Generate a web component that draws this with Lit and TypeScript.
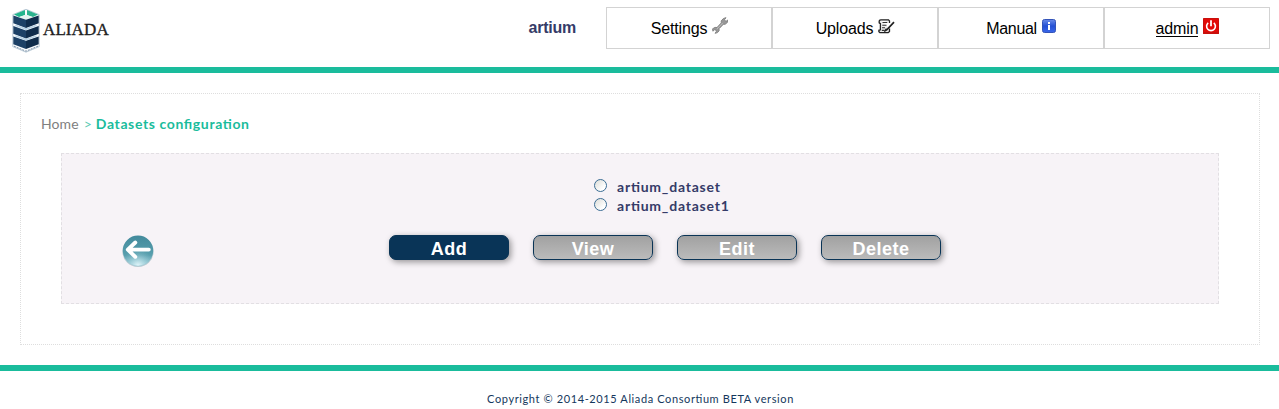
import { LitElement, html, svg, css } from "lit";
import { customElement } from "lit/decorators.js";

const wrench = html`<svg class="icon" width="16" height="17" viewBox="0 0 16 17">
  <path d="M.6 11.8 3 10.4l2 .1 4.3-4.6-.1-2L11.4 1.5 14 .7l-1.5 2 .6 1.2 1.2.2L15.8 3l-.2 2.2-2.4 2-1.9.1L7 11.7l.1 2-1.6 1.9-2.4.7 1.3-2-.6-1.4-1.4-.1L.9 14.2z" fill="#989898" stroke="#858585" stroke-width="1"/>
  <path d="m4.8 12.2 6-6.3" stroke="#bdbdbd" stroke-width="1"/>
</svg>`;

const notes = html`<svg class="icon" width="17" height="15" viewBox="0 0 17 15">
  <path d="M2.3.8h8.2l1 1.1v2M2.3.8 1.2 2v1.8l1.2.8v6.2l-1.5.5v1.4l1 1h8.3l1.3-1.2V9.6" fill="#eee" stroke="#222" stroke-width="1.3"/>
  <path d="M4.5 3.5h4.8M4.3 6.2h4.2M4 8.8h3M3.8 11.4h3" stroke="#333" stroke-width="1.1"/>
  <path d="m16 3.2-7 7.3-1.4.9.7-1.7" fill="none" stroke="#222" stroke-width="1.7"/>
</svg>`;

const info = html`<svg class="icon" width="14" height="14" viewBox="0 0 14 14">
  <defs><linearGradient id="ib" x2="0" y2="1"><stop stop-color="#6b8cea"/><stop offset=".5" stop-color="#2450d4"/><stop offset="1" stop-color="#3a67ea"/></linearGradient></defs>
  <rect x=".5" y=".5" width="13" height="13" rx="2" fill="url(#ib)" stroke="#3454b8"/>
  <path d="M6 3h2v2H6zM6 6h2v5H6z" fill="#fff"/>
</svg>`;

const power = html`<svg class="icon" width="16" height="16" viewBox="0 0 16 16">
  <rect width="16" height="16" rx=".6" fill="#c9100c"/>
  <rect x="1" y="1" width="14" height="13" fill="#e10b08"/>
  <path d="M5.2 4.8a4.4 4.4 0 1 0 5.6 0" fill="none" stroke="#fff" stroke-width="1.6"/>
  <path d="M8 2.3v5.9" stroke="#fff" stroke-width="1.8"/>
</svg>`;

const layer = (y: number) => svg`
  <path d=${`M1.3 ${y}v7.8L14 ${y + 12.6}V${y + 4.4}z`} fill="#1d4166"/>
  <path d=${`M14 ${y + 4.4}v8.2l12.7-4.8V${y}z`} fill="#102d4c"/>`;

const glow = (y: number) => svg`
  <path d=${`M5 ${y + 1.4}v.6L14 ${y + 5.4} 23 ${y + 2}v-.6L14 ${y + 4.4}z`} fill="#8fb9d8"/>
  <path d=${`M3.4 ${y + 1.4} 14 ${y + 5.4} 24.6 ${y + 1.4}`} fill="none" stroke="#b7d3e6" stroke-width="1.2"/>`;

const tower = html`<svg class="tower" width="28" height="44" viewBox="0 0 28 44">
  <path d="M.8 5.6 14 .3l13.2 5.3v32L14 43.2.8 37.6z" fill="#fbfdfe" stroke="#a8bccb" stroke-width=".8"/>
  <path d="M2 5.6 13 1v5L7 8z" fill="#23b58d"/>
  <path d="M26 5.6 15 1v5l6 2z" fill="#2db38e"/>
  <path d="M7 8.2 14 5.8l7 2.4-7 2.6z" fill="#e4f5f1"/>
  ${layer(6.4)}${layer(17)}${layer(27.4)}${glow(15)}${glow(25.5)}
  <path d="m2 37.2 12 5 12-5" fill="none" stroke="#7d91a8" stroke-dasharray="2 1"/>
</svg>`;

const back = html`<svg width="34" height="34" viewBox="0 0 34 34">
  <defs>
    <linearGradient id="bg" x2="0" y2="1"><stop stop-color="#438a9c"/><stop offset=".65" stop-color="#589fae"/><stop offset="1" stop-color="#9fd0dc"/></linearGradient>
    <radialGradient id="gl" cx=".5" cy="1" r=".55"><stop stop-color="#e4f7fb"/><stop offset="1" stop-color="#8cc4d0" stop-opacity="0"/></radialGradient>
  </defs>
  <ellipse cx="17" cy="17.6" rx="15.6" ry="15.3" fill="#b9cbd3"/>
  <circle cx="17" cy="16.7" r="15.2" fill="url(#bg)"/>
  <circle cx="17" cy="16.7" r="15" fill="url(#gl)"/>
  <path d="M27.8 15.6H7M14.3 8.5 6.8 15.6l7.5 7.2" fill="none" stroke="#fff" stroke-width="3.9" stroke-linecap="round" stroke-linejoin="round"/>
</svg>`;

@customElement("app-root")
export class AppRoot extends LitElement {
  static styles = css`
    :host { display: block; height: 409px; background: #fff; overflow: hidden; font-family: Lato, Carlito, sans-serif; font-feature-settings: "liga" 1; }
    * { box-sizing: border-box; }
    header { display: flex; height: 73px; border-bottom: 6px solid #1abc9c; padding: 7px 9px 0 12px; font-family: "Liberation Sans", Arial, sans-serif; }
    .logo { display: flex; margin-top: 2px; }
    .tower { flex: none; }
    .name { margin: 9px 0 0 3px; font: 17px/23px "Liberation Serif", serif; letter-spacing: .1px; color: #222; -webkit-text-stroke: .35px #222; }
    .org { margin: 11px 30px 0 auto; font-size: 16px; line-height: 20px; font-weight: bold; letter-spacing: -.25px; color: #353b68; }
    nav { display: flex; }
    .tab { width: 166px; height: 42px; border: 1px solid #d3d3d3; display: flex; justify-content: center; gap: 5px; padding: 10px 0 0 1px; font-size: 16px; line-height: 21px; letter-spacing: -.15px; color: #000; }
    .icon { flex: none; }
    .i0 .icon { margin-top: -1px; }
    .i1 .icon { margin-top: 1px; }
    .i2 { letter-spacing: -.3px; padding-right: 1px; }
    .i2 .icon { margin-top: 1px; }
    .user { height: 19px; line-height: 21px; border-bottom: 1px solid #000; }
    main { margin: 20px 19px 20px 20px; height: 252px; border: 1px dotted #dedede; padding: 20px 40px 0; }
    .crumbs { display: flex; margin-left: -20px; height: 39px; font-size: 14px; line-height: 20px; color: #808080; white-space: nowrap; }
    .home { letter-spacing: .1px; }
    .sep { color: #5fcbb5; margin: 0 4px 0 5px; }
    .here { color: #1abc9c; font-weight: bold; letter-spacing: .62px; }
    .panel { height: 151px; border: 1px dashed #e2dfe3; background: #f7f3f7; display: grid; grid-template-rows: 81px 1fr; padding-left: 60px; }
    .sets { display: grid; grid-auto-rows: 19px; align-content: start; padding: 23px 0 0 472px; }
    .set { display: flex; align-items: center; color: #353b68; font-weight: bold; font-size: 14px; line-height: 19px; letter-spacing: .78px; }
    .radio { width: 13px; height: 13px; margin: -3px 10px 0 0; border: 1.4px solid #3b6d94; border-radius: 50%; background: linear-gradient(135deg, #dcdcd7, #fff 75%); }
    .actions { display: flex; align-items: flex-start; }
    .back { width: 34px; height: 34px; margin: -1px 234px 0 -1px; }
    .btn { width: 120px; height: 25px; margin-right: 24px; border: 1px solid #0a3456; border-radius: 7px; background: linear-gradient(#a1a1a1, #bbb); box-shadow: 2px 2px 6px #0006; color: #fff; font: bold 18px/23px "Liberation Sans", Arial, sans-serif; letter-spacing: .5px; text-align: center; padding: 2px 0 0; }
    .primary { background: #093457; }
    footer { border-top: 6px solid #1abc9c; text-align: center; padding: 18px 0 0 2px; font-size: 11px; line-height: 20px; letter-spacing: .61px; color: #14375c; }
  `;

  render() {
    return html`
      <header>
        <div class="logo">${tower}<span class="name">ALIADA</span></div>
        <div class="org">artium</div>
        <nav>
          <div class="tab i0"><span>Settings</span>${wrench}</div>
          <div class="tab i1"><span>Uploads</span>${notes}</div>
          <div class="tab i2"><span>Manual</span>${info}</div>
          <div class="tab i3"><span class="user">admin</span>${power}</div>
        </nav>
      </header>
      <main>
        <div class="crumbs"><span class="home">Home</span><span class="sep">&gt;</span><span class="here">Datasets configuration</span></div>
        <section class="panel">
          <div class="sets">
            ${["artium_dataset", "artium_dataset1"].map((s) => html`<label class="set"><span class="radio"></span><span>${s}</span></label>`)}
          </div>
          <div class="actions">
            <a class="back">${back}</a>
            ${["Add", "View", "Edit", "Delete"].map((b, i) => html`<button class="btn ${i ? "" : "primary"}">${b}</button>`)}
          </div>
        </section>
      </main>
      <footer>Copyright © 2014-2015 Aliada Consortium BETA version</footer>`;
  }
}
